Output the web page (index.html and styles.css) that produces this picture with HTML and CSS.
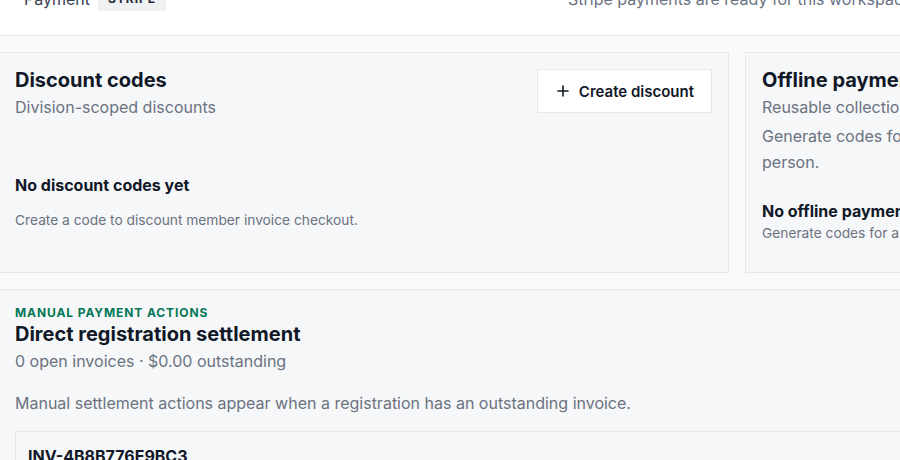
FILE: index.html
```html
<!DOCTYPE html>
<html lang="en">
<head>
<meta charset="utf-8">
<title>Payment settings</title>
<link rel="stylesheet" href="styles.css">
</head>
<body>
<header class="topbar">
  <div class="topbar-inner">
    <div class="topbar-left">
      <span class="topbar-label">Payment</span>
      <span class="badge">STRIPE</span>
    </div>
    <p class="topbar-status">Stripe payments are ready for this workspace.</p>
  </div>
</header>

<main class="content">
  <div class="cards">
    <section class="card">
      <div class="card-head">
        <div>
          <h2 class="card-title">Discount codes</h2>
          <p class="card-sub">Division-scoped discounts</p>
        </div>
        <button class="btn" type="button">
          <svg class="btn-icon" viewBox="0 0 12 12" width="12" height="12" aria-hidden="true">
            <path d="M6 1v10M1 6h10" fill="none" stroke="currentColor" stroke-width="1.6" stroke-linecap="round"/>
          </svg>
          <span>Create discount</span>
        </button>
      </div>
      <div class="empty empty-discount">
        <p class="empty-title">No discount codes yet</p>
        <p class="empty-text empty-text-spaced">Create a code to discount member invoice checkout.</p>
      </div>
    </section>

    <section class="card">
      <h2 class="card-title">Offline payment codes</h2>
      <p class="card-sub">Reusable collection codes for offline payments</p>
      <p class="card-body">Generate codes for cash, check, or transfer payments made in<br>person.</p>
      <div class="empty empty-offline">
        <p class="empty-title">No offline payment codes yet</p>
        <p class="empty-text">Generate codes for a division to collect payments offline.</p>
      </div>
    </section>
  </div>

  <section class="manual">
    <p class="eyebrow">Manual payment actions</p>
    <h2 class="manual-title">Direct registration settlement</h2>
    <p class="card-sub">0 open invoices · $0.00 outstanding</p>
    <p class="manual-text">Manual settlement actions appear when a registration has an outstanding invoice.</p>
    <div class="invoice">
      <p class="invoice-id">INV-4B8B776E9BC3</p>
    </div>
  </section>
</main>
</body>
</html>
```

FILE: styles.css
```css
* {
  box-sizing: border-box;
}

html, body {
  margin: 0;
  padding: 0;
}

body {
  width: 900px;
  height: 460px;
  overflow: hidden;
  background: #fafafa;
  font-family: Inter, "Noto Sans", "Liberation Sans", sans-serif;
  color: #111827;
}

p, h2 {
  margin: 0;
}

.topbar {
  height: 36px;
  background: #ffffff;
  border-bottom: 1px solid #e5e7eb;
  overflow: hidden;
}

.topbar-inner {
  margin-top: -13px;
  height: 24px;
  display: grid;
  grid-template-columns: 544px 1fr;
  align-items: center;
  padding-left: 24px;
}

.topbar-left {
  display: flex;
  align-items: center;
  gap: 8px;
}

.topbar-label {
  font-size: 16px;
  line-height: 24px;
  font-weight: 400;
  color: #374151;
}

.badge {
  display: inline-block;
  background: #eef0f2;
  color: #1f2937;
  font-size: 12px;
  line-height: 20px;
  font-weight: 700;
  letter-spacing: 0.08em;
  padding: 2px 10px;
  border-radius: 2px;
}

.topbar-status {
  font-size: 16px;
  line-height: 24px;
  color: #6b7280;
  white-space: nowrap;
}

.content {
  padding-top: 16px;
  margin-left: -2px;
  width: 1300px;
}

.cards {
  display: grid;
  grid-template-columns: 731px 440px;
  gap: 16px;
}

.card {
  height: 221px;
  background: #f6f7f9;
  border: 1px solid #e5e7eb;
  padding: 16px;
}

.card-head {
  display: flex;
  justify-content: space-between;
  align-items: flex-start;
}

.card-title {
  font-size: 20px;
  line-height: 22px;
  font-weight: 700;
  color: #111827;
  white-space: nowrap;
}

.card-sub {
  margin-top: 4px;
  font-size: 16px;
  line-height: 24px;
  color: #6b7280;
  white-space: nowrap;
}

.card-body {
  margin-top: 4px;
  font-size: 16px;
  line-height: 26px;
  color: #6b7280;
  white-space: nowrap;
}

.btn {
  display: inline-flex;
  align-items: center;
  gap: 10px;
  height: 44px;
  padding: 0 17px 0 19px;
  background: #ffffff;
  border: 1px solid #e5e7eb;
  border-radius: 0;
  font-family: inherit;
  font-size: 15px;
  font-weight: 600;
  color: #111827;
}

.btn-icon {
  display: block;
  flex: none;
}

.empty-discount {
  margin-top: 54px;
}

.empty-offline {
  margin-top: 24px;
}

.empty-title {
  font-size: 16px;
  line-height: 24px;
  font-weight: 700;
  color: #111827;
  white-space: nowrap;
}

.empty-text {
  font-size: 13.75px;
  line-height: 20px;
  color: #6b7280;
  white-space: nowrap;
}

.empty-text-spaced {
  margin-top: 13px;
}

.manual {
  margin-top: 16px;
  background: #f6f7f9;
  border: 1px solid #e5e7eb;
  padding: 16px;
  height: 300px;
}

.eyebrow {
  font-size: 12px;
  line-height: 14px;
  font-weight: 700;
  letter-spacing: 0.075em;
  text-transform: uppercase;
  color: #047857;
}

.manual-title {
  margin-top: 3px;
  font-size: 20px;
  line-height: 22px;
  font-weight: 700;
  color: #111827;
}

.manual-text {
  margin-top: 18px;
  font-size: 16px;
  line-height: 24px;
  color: #6b7280;
}

.invoice {
  margin-top: 16px;
  border: 1px solid #e5e7eb;
  padding: 12px;
  height: 120px;
}

.invoice-id {
  font-size: 16px;
  line-height: 24px;
  font-weight: 700;
  color: #111827;
}
```
